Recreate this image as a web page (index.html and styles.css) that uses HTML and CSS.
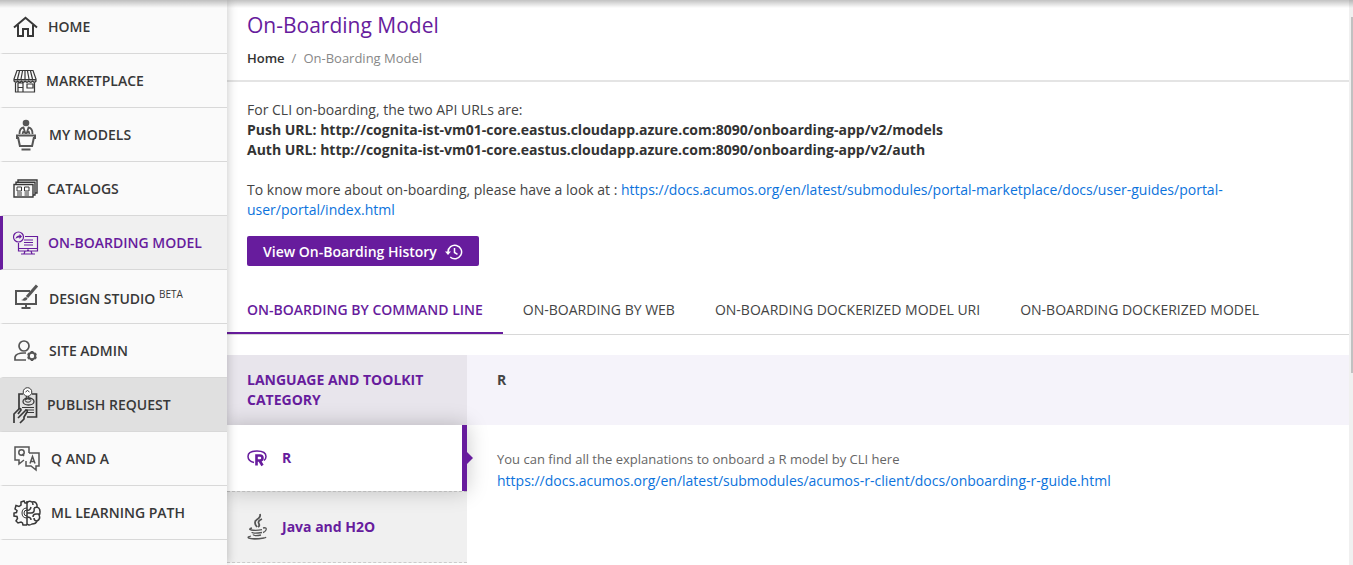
FILE: index.html
```html
<!DOCTYPE html>
<html lang="en">
<head>
<meta charset="utf-8">
<title>On-Boarding Model</title>
<link rel="stylesheet" href="styles.css">
</head>
<body>
<div class="app">
  <nav class="sidebar" aria-label="Main">
    <a class="nav-item" href="#"><svg class="icon" width="25" height="22" viewBox="0 0 25 22" stroke-width="2"><path d="M1 11.500 12.500 1.800 24 11.500M5 9v11h5v-7h5v7h5V9"/></svg><span>HOME</span></a>
    <a class="nav-item nav-tight" href="#"><svg class="icon" width="24" height="24" viewBox="0 0 24 24" stroke-width="1.200"><path d="M4 1.500h16l3 8.500v2H1v-2zM6.500 2 4.500 10M9.500 2 8 10M12 2v8M14.500 2 16 10M17.500 2l2 8M1 10.500h22M1 12q2 3 3.700 0 2 3 3.700 0 2 3 3.700 0 2 3 3.700 0 2 3 3.700 0 2 3 3.700 0M2.500 14v9h19v-9M5 23v-9h5v9M5 18.500h5M14 15h6v4h-6z"/></svg><span>MARKETPLACE</span></a>
    <a class="nav-item" href="#"><svg class="icon soft" width="26" height="32" viewBox="0 0 26 32" stroke-width="2"><circle cx="13" cy="4" r="3.300" fill="currentColor" stroke="none"/><path d="M6.500 15q0-6 4-6.500L12.500 15M19.500 15q0-6-4-6.500L13.500 15M9.500 15l1-3M16.500 15l-1-3" stroke-width="1.800"/><path d="M4 16.500h18v2.500h-1.200l-1.700 8H6.900l-1.700-8H4zM8.500 30.500h9"/></svg><span>MY MODELS</span></a>
    <a class="nav-item nav-tight" href="#"><svg class="icon" width="25" height="20" viewBox="0 0 25 20" stroke-width="1.400"><path d="M1 5.500h19V18H1zM3 5.500V3.300h19V16h-2M5 3V1h19v13h-2"/><path d="M4 8h4.500v4H4zM11.500 8H16v4h-4.500zM4 14h5M11.500 14H16M4 16h5M11.500 16H16" stroke-width="1"/></svg><span>CATALOGS</span></a>
    <a class="nav-item nav-tight active" href="#"><svg class="icon" width="26" height="26" viewBox="0 0 26 26" stroke-width="1.200"><circle cx="5.500" cy="7" r="5"/><path d="M2.500 9q.5-3.500 4-3.500V4L9 6.500 6.500 9V7.500Q4 7 2.500 9z" fill="currentColor" stroke="none"/><path d="M12 6.500h12.500V21h-19v-8M5.500 18.500h19M11 10h9M11 12.500h9M11 15h9M12 21l-1 3M18 21l1 3M8 24h14M14 20h2"/></svg><span>ON-BOARDING MODEL</span></a>
    <a class="nav-item" href="#"><svg class="icon soft" width="26" height="26" viewBox="0 0 26 26" stroke-width="2"><path d="M17 7H3v13h20V10M13 20v4M8.500 24h9"/><path d="M24 1.500 14 13" stroke-width="3"/><path d="M8 16q2 0 3-2 2-1.500 3.500 0Q14 18 8 16z" fill="currentColor" stroke="none"/></svg><span class="with-sup">DESIGN STUDIO <sup>BETA</sup></span></a>
    <a class="nav-item" href="#"><svg class="icon soft" width="26" height="24" viewBox="0 0 26 24" stroke-width="1.700"><circle cx="11" cy="7" r="5"/><path d="M13 21H2v-3q1-4 9-4h2"/><circle cx="19" cy="17" r="3.300" stroke-width="2.200"/><path d="M19 12v2M19 20v2M14.700 14.500l1.700 1M21.600 18.500l1.700 1M14.700 19.500l1.700-1M21.600 15.500l1.700-1" stroke-width="2.400"/></svg><span>SITE ADMIN</span></a>
    <a class="nav-item hovered nav-tight" href="#"><svg class="icon" width="25" height="38" viewBox="0 0 25 38" stroke-width="1.700"><path d="M10 8H6v15M19 8h4.500v23H14"/><circle cx="14.500" cy="6" r="4.300" fill="#fff" stroke-width="1"/><path d="M12.500 6q2-3 4 0M13.500 10l-.7 4M15.500 10l.7 4" stroke-width="1"/><ellipse cx="15.500" cy="15.500" rx="5.500" ry="3.500" stroke-width="1.300"/><ellipse cx="15" cy="14.500" rx="2.800" ry="1.700" stroke-width="1"/><path d="M9 21.500h12M12 24h9M14 26.500h7" stroke-width="1"/><path d="M1 37v-9l5-5q2-1 2 1l-3 4M5 32l8-8q2 0 1 2l-3 5v2l-4 4"/></svg><span>PUBLISH REQUEST</span></a>
    <a class="nav-item nav-wide" href="#"><svg class="icon soft" width="28" height="27" viewBox="0 0 28 27" stroke-width="1.500"><path d="M11 15l-5 4v-4H2V2h14v6M16 8h10v13h-3v4l-5-4h-5v-5"/><circle cx="8.500" cy="7.500" r="2.700"/><path d="M9 9l2 2M17 18.500l2.500-7 2.500 7M17.700 16.500h3.600"/></svg><span>Q AND A</span></a>
    <a class="nav-item nav-wide" href="#"><svg class="icon" width="28" height="26" viewBox="0 0 28 26" stroke-width="1.500"><path d="M14 1v24M14 3h-2L11 1 8 2v3L6 6.500 3 5.500 2 9l2 1.500-.5 2L1 13v3l3 .5.500 2L3 21l2 2 3-1 1.500 1 .5 2h4"/><path d="M14 8q-5 0-5 5t5 5M14 10q-3 0-3 3t3 3" stroke-width="1"/><path d="M14 3q2-3 5-1 1 1 1 3M19 2q4-1 5 3v2q3 1 3 4.500T26 15q2 4-2 6-1 3-5 3-3 2-5 0M14 10q3 1 4-3M14 13h4q4 0 3-5M24 7l-3 1M27 14h-4q-3 0-3 3M14 17q4 0 4 3M24 21q-3 0-3-3"/></svg><span>ML LEARNING PATH</span></a>
  </nav>
  <main class="content">
    <header class="page-head">
      <h1>On-Boarding Model</h1>
      <div class="crumbs"><a href="#">Home</a><span>/</span><span>On-Boarding Model</span></div>
    </header>
    <section class="intro">
      <p>For CLI on-boarding, the two API URLs are:<br><strong>Push URL: http://cognita-ist-vm01-core.eastus.cloudapp.azure.com:8090/onboarding-app/v2/models<br>Auth URL: http://cognita-ist-vm01-core.eastus.cloudapp.azure.com:8090/onboarding-app/v2/auth</strong></p>
      <p>To know more about on-boarding, please have a look at : <a href="#">https://docs.acumos.org/en/latest/submodules/portal-marketplace/docs/user-guides/portal-user/portal/index.html</a></p>
      <button class="history" type="button">View On-Boarding History<svg class="icon" width="18" height="16" viewBox="0 0 18 16" stroke-width="1.500"><path d="M3 8a6.800 6.800 0 1 1 2.200 5M9.500 4v4.500l3 1.800"/><path d="M0 7.500h6L3 11z" fill="currentColor" stroke="none"/></svg></button>
    </section>
    <div class="tabs" role="tablist">
      <button class="tab selected" role="tab" aria-selected="true">ON-BOARDING BY COMMAND LINE</button>
      <button class="tab" role="tab">ON-BOARDING BY WEB</button>
      <button class="tab" role="tab">ON-BOARDING DOCKERIZED MODEL URI</button>
      <button class="tab" role="tab">ON-BOARDING DOCKERIZED MODEL</button>
    </div>
    <div class="toolkit">
      <div class="categories">
        <h2>LANGUAGE AND TOOLKIT CATEGORY</h2>
        <a class="category current" href="#"><svg class="icon" width="20" height="18" viewBox="0 0 20 18"><path d="M7 13.500Q1 12 1 7.500 1 2 10 2t9 5.500q0 2.500-2 4" stroke-width="1.500"/><path d="M9.500 16.500V6.500H13q2.500 0 2.500 2.500T13 11.500H10M12.500 11.500l3 5" stroke-width="2.600"/></svg><span>R</span></a>
        <a class="category" href="#"><svg class="icon soft" width="20" height="27" viewBox="0 0 20 27" stroke-width="1.300"><path d="M13 1q1 3-3 5.500T10 14M15 6q-5 2-3 5 1 2-1 3" stroke-width="1.800"/><path d="M5 15q-4 1-1 2 5 1 11-.3M16 15q4-1 3 2-1 2-3 2.500M5 19q0 2 10 .5M6 21.500q1 2 8 .5M4 23q-7 2 3 2.700 11 .3 12-1.700M1 25q5 2 16 0"/></svg><span>Java and H2O</span></a>
      </div>
      <div class="detail">
        <h2>R</h2>
        <div class="detail-body"><p>You can find all the explanations to onboard a R model by CLI here</p><a href="#">https://docs.acumos.org/en/latest/submodules/acumos-r-client/docs/onboarding-r-guide.html</a></div>
      </div>
    </div>
  </main>
  <div class="scroll-track"><div class="scroll-thumb"></div></div>
</div>
</body>
</html>
```
FILE: styles.css
```css
* { box-sizing: border-box; }
body {
  margin: 0;
  font: 14px/20px "Open Sans", "Noto Sans", sans-serif;
  color: #444;
  background: #fff;
}
h1, h2, p { margin: 0; }
a { color: #0c73dc; text-decoration: none; }
button { font: inherit; border: 0; background: none; cursor: pointer; }
.icon { flex: none; fill: none; stroke: currentColor; }
.soft { color: #555; }
.app {
  position: relative;
  display: flex;
  height: 100vh;
  overflow: hidden;
}
.app::before {
  content: "";
  position: absolute;
  z-index: 3;
  inset: 0 0 auto;
  height: 8px;
  background: linear-gradient(rgba(0, 0, 0, .24), transparent);
}
.sidebar {
  position: relative;
  z-index: 2;
  flex: 0 0 227px;
  background: #fafafa;
  box-shadow: 0 0 10px rgba(0, 0, 0, .24);
}
.nav-item {
  display: flex;
  align-items: center;
  gap: 10px;
  height: 54px;
  padding-left: 10px;
  border-left: 3px solid transparent;
  border-bottom: 1px solid #d8d8d8;
  color: #383838;
  font-weight: 600;
}
.nav-tight { gap: 9px; }
.with-sup { padding-top: 4px; }
.nav-item sup { font-size: 10px; line-height: 10px; font-weight: 400; }
.active { background: #f0f0f0; border-left-color: #671c9d; color: #671c9d; }
.hovered { background: #e0e0e0; border-left-color: #e0e0e0; }
.content { flex: 1; min-width: 0; }
.page-head { padding: 10px 20px 12px; border-bottom: 2px solid #e4e4e4; }
h1 { font-size: 21px; line-height: 30px; font-weight: 500; color: #671c9d; }
.crumbs { display: flex; gap: 7px; padding-top: 8px; font-size: 13px; color: #888; }
.crumbs a { color: #333; font-weight: 600; }
.intro { padding: 18px 120px 20px 20px; }
.intro p { margin-bottom: 20px; }
.intro strong { color: #333; font-weight: 700; }
.intro .history {
  display: flex;
  align-items: center;
  gap: 8px;
  height: 30px;
  margin-top: -4px;
  padding: 2px 16px 0;
  border-radius: 2px;
  background: #671c9d;
  color: #fff;
  font-weight: 600;
}
.tabs { display: flex; border-bottom: 1px solid #d8d8d8; }
.tab { height: 48px; padding: 2px 20px 0; border-bottom: 2px solid transparent; color: #444; }
.selected { border-bottom-color: #671c9d; color: #671c9d; font-weight: 600; }
.toolkit { display: flex; padding-top: 20px; }
.categories { flex: 0 0 240px; background: #f0f0f0; }
.toolkit h2 { height: 70px; padding: 15px 20px; font-size: 14px; line-height: 20px; font-weight: 700; }
.categories h2 { background: #e8e5ec; color: #671c9d; }
.category {
  display: flex;
  align-items: center;
  gap: 15px;
  height: 72px;
  padding: 0 20px;
  border-bottom: 1px dashed #ccc;
  color: #671c9d;
  font-weight: 700;
}
.current {
  position: relative;
  height: 66px;
  border-bottom: 0;
  border-right: 5px solid #671c9d;
  background: #fff;
  box-shadow: 0 0 20px rgba(0, 0, 0, .22);
}
.current::before {
  content: "";
  position: absolute;
  inset: auto -5px -1px 0;
  border-bottom: 1px dashed #bbb;
}
.current::after {
  content: "";
  position: absolute;
  right: -11px;
  top: 27px;
  border: 6px solid transparent;
  border-left-color: #671c9d;
  border-right: 0;
}
.detail { flex: 1; min-width: 0; }
.detail h2 { padding-left: 30px; background: #f5f3fa; }
.detail-body { padding: 24px 30px; }
.detail-body p { font-size: 13px; color: #666; }
.detail-body p + a { line-height: 24px; }
.scroll-track { flex: 0 0 4px; padding: 17px 0 0 2px; background: #f0f0f0; }
.scroll-thumb { height: 65%; background: #c1c1c1; }
```
